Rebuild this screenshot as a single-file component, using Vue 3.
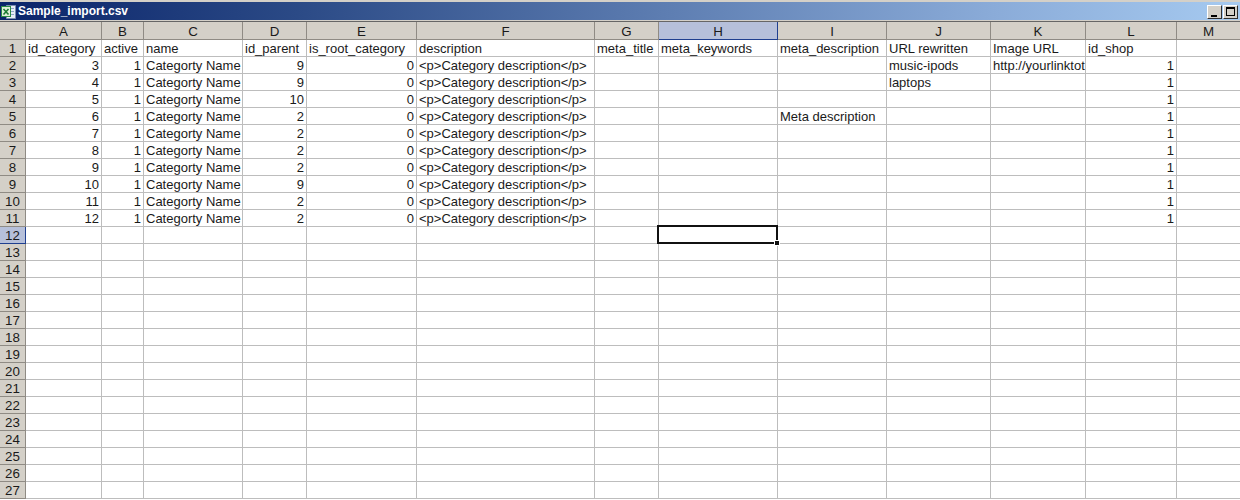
<script setup>
const cols = ['A','B','C','D','E','F','G','H','I','J','K','L','M']
const head = ['id_category','active','name','id_parent','is_root_category','description','meta_title','meta_keywords','meta_description','URL rewritten','Image URL','id_shop','']
const data = [
  [3,1,9,'','music-ipods','http://yourlinktothe'],
  [4,1,9,'','laptops',''],
  [5,1,10,'','',''],
  [6,1,2,'Meta description','',''],
  [7,1,2,'','',''],
  [8,1,2,'','',''],
  [9,1,2,'','',''],
  [10,1,9,'','',''],
  [11,1,2,'','',''],
  [12,1,2,'','','']
]
const rows = []
rows.push(head.map(t => ({ t })))
for (const d of data) {
  rows.push([
    { t: d[0], r: 1 }, { t: d[1], r: 1 }, { t: 'Categorty Name' }, { t: d[2], r: 1 }, { t: 0, r: 1 },
    { t: '<p>Category description</p>' }, { t: '' }, { t: '' }, { t: d[3] }, { t: d[4] }, { t: d[5] }, { t: 1, r: 1 }, { t: '' }
  ])
}
for (let i = 12; i <= 27; i++) rows.push(cols.map(() => ({ t: '' })))
</script>

<template>
  <div class="win">
    <div class="title">
      <svg class="xl" width="17" height="16" viewBox="0 0 17 16">
        <path d="M6.500 1.500h9v13h-9z" fill="#e8eef6" stroke="#7c8fb0" />
        <path d="M11 4.500h3M11 7.500h3M11 10.500h3" stroke="#8fa6c8" fill="none" />
        <rect x="1.500" y="2.500" width="9" height="10" fill="#dff0d8" stroke="#2e8b46" />
        <path d="M3.500 5l5 5.500M8.500 5l-5 5.500" stroke="#1c7a34" stroke-width="1.600" fill="none" />
      </svg>
      <span class="name">Sample_import.csv</span>
      <div class="btns">
        <span class="btn"><i class="min"></i></span>
        <span class="btn"><i class="max"></i></span>
      </div>
    </div>
    <div class="sheet">
      <div class="hd corner"></div>
      <div v-for="c in cols" :key="c" class="hd col" :class="{ on: c === 'H' }">{{ c }}</div>
      <template v-for="(row, i) in rows" :key="i">
        <div class="hd rownum" :class="{ on: i === 11 }">{{ i + 1 }}</div>
        <div
          v-for="(cell, j) in row"
          :key="j"
          class="cell"
          :class="{ right: cell.r, sel: i === 11 && j === 7 }"
        >{{ cell.t }}</div>
      </template>
    </div>
  </div>
</template>

<style scoped>
.win {
  width: 1240px;
  height: 500px;
  overflow: hidden;
  background: #fff;
  font-family: "Liberation Sans", Arial, sans-serif;
  color: #1a1a1a;
  border-top: 2px solid #d4d0c8;
  box-sizing: border-box;
}
.title {
  height: 18px;
  padding: 0 2px 0 0;
  display: flex;
  align-items: center;
  background: linear-gradient(90deg, #0a246a 0%, #2b4a86 24%, #8aabd8 80%, #a6caf0 100%);
}
.xl { flex: none; margin-top: 1px; }
.name {
  margin-left: 1px;
  color: #fff;
  font-size: 12px;
  font-weight: 700;
}
.btns { margin-left: auto; display: flex; gap: 1px; margin-top: 1px; }
.btn {
  width: 15px;
  height: 14px;
  box-sizing: border-box;
  background: #d4d0c8;
  border: 1px solid;
  border-color: #fff #303030 #303030 #fff;
  position: relative;
  display: block;
}
.min {
  position: absolute;
  left: 3px;
  bottom: 1px;
  width: 6px;
  height: 2px;
  background: #000;
}
.max {
  position: absolute;
  left: 2px;
  top: 1px;
  width: 9px;
  height: 9px;
  box-sizing: border-box;
  border: 1px solid #000;
  border-top-width: 2px;
}
.sheet {
  display: grid;
  grid-template-columns: 26px 76px 42px 99px 64px 110px 178px 64px 119px 109px 104px 95px 91px 64px;
  grid-template-rows: 18px;
  grid-auto-rows: 17px;
  border-top: 1px solid #d4d0c8;
  box-shadow: inset 0 1px 0 #666;
  padding-top: 1px;
  font-size: 13px;
}
.hd {
  background: #d4d0c8;
  box-sizing: border-box;
  border-right: 1px solid #8f8b84;
  border-bottom: 1px solid #8f8b84;
  padding-top: 1px;
  display: flex;
  align-items: center;
  justify-content: center;
  font-size: 13.330px;
  line-height: 15px;
}
.hd.on {
  background: #b6c0da;
  border-color: #1f3f8f;
}
.cell {
  box-sizing: border-box;
  border-right: 1px solid #bdbdbd;
  border-bottom: 1px solid #bdbdbd;
  padding: 1px 2px 0;
  line-height: 15px;
  white-space: nowrap;
  overflow: hidden;
  position: relative;
}
.cell.right { text-align: right; }
.cell.sel {
  overflow: visible;
  z-index: 1;
}
.cell.sel::before {
  content: "";
  position: absolute;
  left: -2px;
  top: -2px;
  right: -1px;
  bottom: -1px;
  border: 2px solid #111;
}
.cell.sel::after {
  content: "";
  position: absolute;
  right: -3px;
  bottom: -3px;
  width: 6px;
  height: 6px;
  background: #111;
  border: 1px solid #fff;
  box-sizing: border-box;
}
</style>

<style>
body { margin: 0; background: #fff; }
</style>
